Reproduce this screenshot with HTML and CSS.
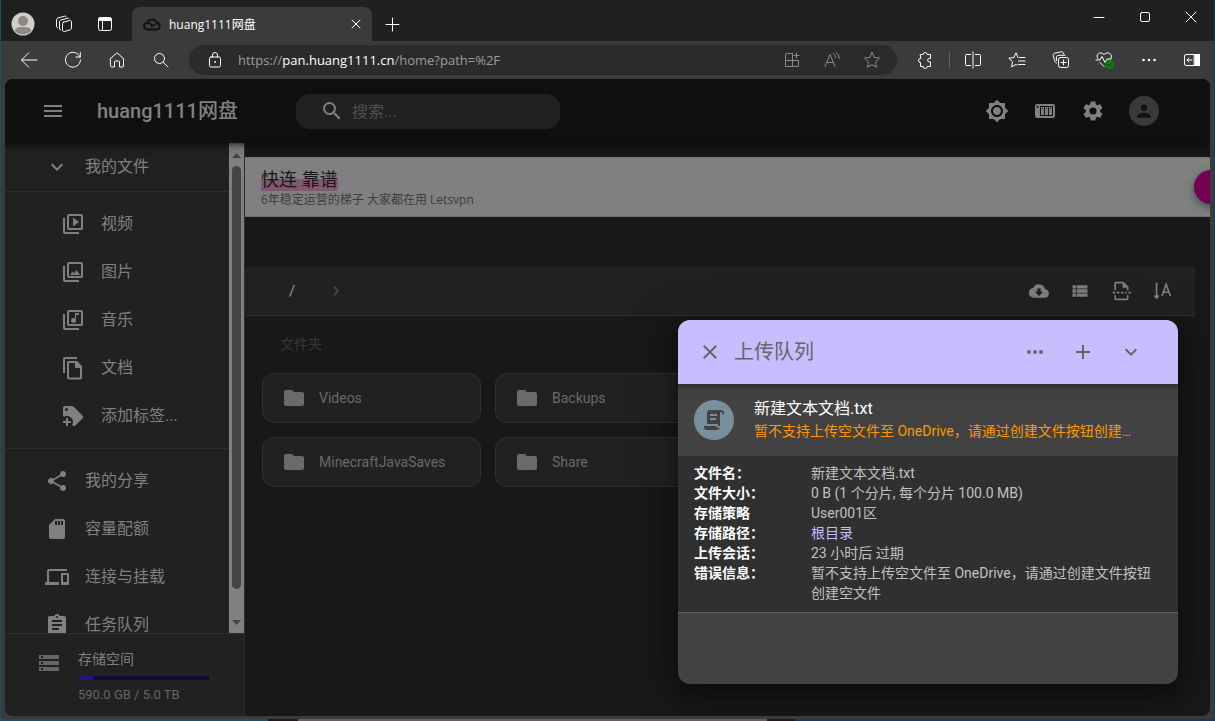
FILE: index.html
```html
<!DOCTYPE html>
<html lang="zh-CN">
<head>
<meta charset="utf-8">
<title>huang1111网盘</title>
<link rel="stylesheet" href="styles.css">
</head>
<body>
<div class="browser">
  <header class="tabstrip">
    <button class="chrome-btn profile" aria-label="Profile"><svg width="24" height="24" viewBox="0 0 24 24"><circle cx="12" cy="12" r="11.5" fill="#d0cecb"/><circle cx="12" cy="9" r="5" fill="#8b8886"/><path d="M4 19c0-3 3-4 8-4s8 1 8 4a11 11 0 0 1-16 0z" fill="#8b8886"/></svg></button>
    <button class="chrome-btn" aria-label="Workspaces"><svg class="line" width="18" height="18" viewBox="0 0 18 18"><path d="M8.500 7.200l6-1.700c1.200-.3 2 .3 2 1.500v6c0 1-.5 1.600-1.500 1.900l-5.500 1.600c-1.200.3-2-.3-2-1.500V9c0-1 .3-1.500 1-1.800z"/><path d="M4.500 14V7c0-1 .5-1.700 1.500-2l6.500-1.800c.6-.2 1-.1 1.500.3M1.500 11.500V5c0-1 .5-1.700 1.500-2l6.500-1.800c.6-.2 1 0 1.500.3M4.500 13.500c.1.700.5 1.200 1.200 1.300M1.500 11.500c0 .6.500 1.200 1.200 1.300"/></svg></button>
    <button class="chrome-btn" aria-label="Tab actions"><svg class="line" width="16" height="16" viewBox="0 0 16 16"><rect x="1.500" y="1.500" width="13" height="13" rx="2"/><path d="M5.500 4v10"/><path d="M2 2h12v2.500H2z" fill="#fff"/></svg></button>
    <div class="tab">
      <svg width="18" height="14" viewBox="0 0 18 14" fill="none" stroke="#111" stroke-width="1.800"><path d="M4.500 12.500a3.300 3.300 0 0 1-.3-6.600A5 5 0 0 1 13.700 6a3.300 3.300 0 0 1 .5 6.500z"/><path d="M4.200 5.900c2.300 0 3.600.7 4.800 2.600M8.500 10c1-1.500 2.500-2.500 4-2"/></svg>
      <span class="tab-title">huang1111网盘</span>
      <button class="tab-close" aria-label="Close tab"><svg class="line" width="10" height="10" viewBox="0 0 10 10"><path d="M1 1l8 8M9 1L1 9"/></svg></button>
    </div>
    <button class="chrome-btn new-tab" aria-label="New tab"><svg class="line" width="15" height="15" viewBox="0 0 15 15"><path d="M7.500 1v13M1 7.500h13"/></svg></button>
    <div class="window-controls">
      <button aria-label="Minimize"><svg class="line" width="12" height="12" viewBox="0 0 12 12"><path d="M1 6.500h10"/></svg></button>
      <button aria-label="Maximize"><svg class="line" width="12" height="12" viewBox="0 0 12 12"><rect x="1.500" y="1.500" width="9" height="9" rx="1.500"/></svg></button>
      <button aria-label="Close"><svg class="line" width="12" height="12" viewBox="0 0 12 12"><path d="M1 1l10 10M11 1L1 11"/></svg></button>
    </div>
  </header>

  <nav class="toolbar">
    <div class="nav-buttons">
      <button class="chrome-btn" aria-label="Back"><svg class="line" width="18" height="18" viewBox="0 0 18 18"><path d="M17 9H1.500M8.500 2l-7 7 7 7"/></svg></button>
      <button class="chrome-btn" aria-label="Refresh"><svg class="line" width="18" height="18" viewBox="0 0 18 18"><path d="M16 6A7.500 7.500 0 1 0 16.500 9M16.300 1.500V6h-4.500"/></svg></button>
      <button class="chrome-btn" aria-label="Home"><svg class="line" width="18" height="18" viewBox="0 0 18 18"><path d="M2.500 7.500L9 1.800l6.500 5.700V15a1 1 0 0 1-1 1h-3v-5a1 1 0 0 0-1-1h-3a1 1 0 0 0-1 1v5h-3a1 1 0 0 1-1-1z"/></svg></button>
      <button class="chrome-btn" aria-label="Search"><svg class="line" width="18" height="18" viewBox="0 0 18 18"><circle cx="7.500" cy="7.500" r="5"/><path d="M11.300 11.300L16 16"/></svg></button>
    </div>
    <div class="address">
      <svg class="line" width="16" height="18" viewBox="0 0 16 18"><rect x="2.500" y="6" width="11" height="10" rx="1.500"/><path d="M5.500 6V4a2.500 2.500 0 0 1 5 0v2"/><circle cx="8" cy="11" r=".5"/></svg>
      <p class="url">https://<b>pan.huang1111.cn</b>/home?path=%2F</p>
      <div class="address-actions">
        <button aria-label="Install app"><svg class="line" width="18" height="18" viewBox="0 0 18 18"><path d="M9.500 2.500h-6a1 1 0 0 0-1 1v12h13v-6M2.500 9.500h13M9.500 2.500v13M13.500 2v5M11 4.500h5"/></svg></button>
        <button aria-label="Read aloud"><svg class="line" width="18" height="18" viewBox="0 0 18 18"><path d="M2 15.500L7 3.500l5 12M3.700 11.500h6.600M10.500 2.500c1.500 1 2 2.500 2 4M13 1.500c2.200 1.500 3.200 3.500 3.200 6"/></svg></button>
        <button aria-label="Add to favorites"><svg class="line" width="18" height="18" viewBox="0 0 18 18"><path d="M9 1.500l2.300 4.900 5.200.7-3.800 3.700.9 5.400L9 13.700l-4.600 2.500.9-5.400L1.500 7.100l5.200-.7z"/></svg></button>
      </div>
    </div>
    <div class="ext-buttons">
      <button aria-label="Extensions"><svg class="line" width="18" height="18" viewBox="0 0 18 18"><path d="M4.500 3.500h2.700a2 2 0 0 1 4 0h3.300v4h-1.200a1.700 1.700 0 0 0 0 3.400h1.200v4.600h-3.300a2 2 0 0 1-4 0H4.500v-4a2 2 0 0 1 0-4z"/></svg></button>
      <span class="divider"></span>
      <button aria-label="Split screen"><svg class="line" width="18" height="18" viewBox="0 0 18 18"><path d="M6.500 3.500h-4a1 1 0 0 0-1 1v9a1 1 0 0 0 1 1h4M11.500 3.500h4a1 1 0 0 1 1 1v9a1 1 0 0 1-1 1h-4M9 1v16"/></svg></button>
      <button aria-label="Favorites"><svg class="line" width="18" height="18" viewBox="0 0 18 18"><path d="M10 6.500L8 1.800 5.800 6.500l-5 .7 3.700 3.600-.9 5 4.400-2.300 1 .5M11.500 6.500H17M10.500 10H17M10.500 13.500H17"/></svg></button>
      <button aria-label="Collections"><svg class="line" width="18" height="18" viewBox="0 0 18 18"><rect x="6.500" y="6.500" width="10" height="10" rx="2"/><path d="M11.500 9v5M9 11.500h5M4.500 12c-1-.3-1.400-.9-1.700-1.800L1.300 4.500C1 3.300 1.500 2.500 2.700 2.200l6.500-1.400c1-.2 1.800.2 2.200 1.200l.4 1M4.500 9.500V6c0-1 .8-1.700 1.700-1.700H13"/></svg></button>
      <button aria-label="Browser essentials"><svg class="line" width="20" height="20" viewBox="0 0 20 20"><path d="M3 9C0 4.500 4.500.5 9 4.500c4.500-4 9 0 7 4M5 12.500l4 4M1 10h4l2-3.500 3 6L12 9h4"/><circle cx="14.500" cy="14.500" r="4.500" fill="#107c10" stroke="none"/><path d="M12.500 14.500l1.500 1.500 2.800-3" stroke="#06480a"/></svg></button>
      <button aria-label="Settings and more"><svg width="18" height="18" viewBox="0 0 18 18" fill="#fff"><circle cx="3.500" cy="9" r="1.300"/><circle cx="9" cy="9" r="1.300"/><circle cx="14.500" cy="9" r="1.300"/></svg></button>
      <button class="side-toggle" aria-label="Sidebar"><svg class="line" width="18" height="18" viewBox="0 0 18 18"><rect x="1.500" y="3.500" width="15" height="11" rx="1.500"/><path d="M11.500 3.500h5v11h-5z" fill="#fff"/><path d="M9 9H4M6 7L4 9l2 2"/></svg></button>
    </div>
  </nav>

  <div class="page">
    <header class="appbar">
      <button class="icon-btn" aria-label="菜单"><svg class="mi" viewBox="0 0 24 24"><path d="M3 18h18v-2H3v2zm0-5h18v-2H3v2zm0-7v2h18V6H3z"/></svg></button>
      <h1>huang1111网盘</h1>
      <label class="search"><svg class="mi" viewBox="0 0 24 24"><path d="M15.500 14h-.79l-.28-.27A6.470 6.470 0 0 0 16 9.500 6.500 6.500 0 1 0 9.500 16c1.610 0 3.090-.59 4.230-1.570l.27.28v.79l5 4.990L20.490 19l-4.990-5zm-6 0C7.010 14 5 11.990 5 9.500S7.010 5 9.500 5 14 7.010 14 9.500 11.990 14 9.500 14z"/></svg><input type="text" placeholder="搜索..." aria-label="搜索"></label>
      <div class="appbar-actions">
        <button class="icon-btn" aria-label="切换主题"><svg class="mi" viewBox="0 0 24 24"><path d="M20 8.690V4h-4.690L12 .69 8.690 4H4v4.690L.69 12 4 15.310V20h4.690L12 23.310 15.310 20H20v-4.690L23.310 12 20 8.690zM12 18c-3.310 0-6-2.690-6-6s2.690-6 6-6 6 2.690 6 6-2.690 6-6 6zm0-10c-2.210 0-4 1.790-4 4s1.790 4 4 4 4-1.790 4-4-1.790-4-4-4z"/></svg></button>
        <button class="icon-btn" aria-label="存储"><svg class="mi" viewBox="0 0 24 24"><path fill-rule="evenodd" d="M4 5h16a2 2 0 0 1 2 2v10a2 2 0 0 1-2 2H4a2 2 0 0 1-2-2V7a2 2 0 0 1 2-2zm.500 2a1 1 0 1 0 0 2 1 1 0 0 0 0-2zM7 7v10h13V7zm1 1h3v8H8zm4 0h3v8h-3zm4 0h3v8h-3zM9 9v1h1V9zm4 0v1h1V9zm4 0v1h1V9z"/></svg></button>
        <button class="icon-btn" aria-label="设置"><svg class="mi" viewBox="0 0 24 24"><path fill-rule="evenodd" d="M19.140 12.940c.04-.3.06-.61.06-.94 0-.32-.02-.64-.07-.94l2.030-1.580c.18-.14.23-.41.12-.61l-1.920-3.320c-.12-.22-.37-.29-.59-.22l-2.390.96c-.5-.38-1.030-.7-1.620-.94l-.36-2.540c-.04-.24-.24-.41-.48-.41h-3.840c-.24 0-.43.17-.47.41l-.36 2.540c-.59.24-1.130.57-1.620.94l-2.390-.96c-.22-.08-.47 0-.59.22L2.740 8.870c-.12.21-.08.47.12.61l2.030 1.580c-.05.3-.09.63-.09.94s.02.64.07.94l-2.030 1.580c-.18.14-.23.41-.12.61l1.920 3.320c.12.22.37.29.59.22l2.390-.96c.5.38 1.030.7 1.620.94l.36 2.540c.05.24.24.41.48.41h3.840c.24 0 .44-.17.47-.41l.36-2.540c.59-.24 1.130-.56 1.620-.94l2.390.96c.22.08.47 0 .59-.22l1.920-3.320c.12-.22.07-.47-.12-.61l-2.010-1.580zM12 8.400a3.600 3.600 0 1 1 0 7.200 3.600 3.600 0 0 1 0-7.200z"/></svg></button>
        <button class="avatar" aria-label="用户"><svg width="20" height="20" viewBox="0 0 24 24" fill="#131313"><path d="M12 12c2.210 0 4-1.790 4-4s-1.790-4-4-4-4 1.790-4 4 1.790 4 4 4zm0 2c-2.670 0-8 1.340-8 4v2h16v-2c0-2.660-5.330-4-8-4z"/></svg></button>
      </div>
    </header>

    <div class="body">
      <aside class="sidebar">
        <div class="side-scroll">
          <div class="side-list">
            <ul class="group">
              <li><a href="#"><svg class="mi" viewBox="0 0 24 24"><path d="M7.410 8.590L12 13.170l4.590-4.580L18 10l-6 6-6-6z"/></svg>我的文件</a></li>
            </ul>
            <ul class="group sub">
              <li><a href="#"><svg class="mi" viewBox="0 0 24 24"><path d="M4 6H2v14c0 1.100.9 2 2 2h14v-2H4V6zm16-4H8c-1.100 0-2 .9-2 2v12c0 1.100.9 2 2 2h12c1.100 0 2-.9 2-2V4c0-1.100-.9-2-2-2zm0 14H8V4h12v12zM12 5.500v9l6-4.500z"/></svg>视频</a></li>
              <li><a href="#"><svg class="mi" viewBox="0 0 24 24"><path d="M4 6H2v14c0 1.100.9 2 2 2h14v-2H4V6zm16-4H8c-1.100 0-2 .9-2 2v12c0 1.100.9 2 2 2h12c1.100 0 2-.9 2-2V4c0-1.100-.9-2-2-2zm0 14H8V4h12v12zM9 15l2.500-3.500 1.500 2 2.500-3.500L19 15z"/></svg>图片</a></li>
              <li><a href="#"><svg class="mi" viewBox="0 0 24 24"><path d="M4 6H2v14c0 1.100.9 2 2 2h14v-2H4V6zm16-4H8c-1.100 0-2 .9-2 2v12c0 1.100.9 2 2 2h12c1.100 0 2-.9 2-2V4c0-1.100-.9-2-2-2zm0 14H8V4h12v12zM12.500 15a2.500 2.500 0 0 0 2.500-2.500V7h3V5h-4v5.500a2.500 2.500 0 1 0-1.500 4.500z"/></svg>音乐</a></li>
              <li><a href="#"><svg class="mi" viewBox="0 0 24 24"><path d="M16 0H4a2 2 0 0 0-2 2v14h2V2h12zm0 4H8a2 2 0 0 0-2 2v14.500a2 2 0 0 0 2 2h11a2 2 0 0 0 2-2V9zM8 20.500V6h6v5h5v9.500z" transform="translate(0 1)"/></svg>文档</a></li>
              <li><a href="#"><svg class="mi" viewBox="0 0 24 24"><path d="M21.410 11.580l-9-9C12.040 2.210 11.530 2 11 2H4C2.900 2 2 2.900 2 4v7c0 .53.21 1.040.59 1.410l.41.41C3.900 12.300 4.940 12 6 12a6 6 0 0 1 6 6c0 1.060-.3 2.090-.82 3l.41.41c.37.37.88.59 1.410.59s1.040-.21 1.410-.59l7-7c.38-.37.59-.88.59-1.410s-.21-1.040-.59-1.420zM5.500 7a1.500 1.500 0 1 1 0-3 1.500 1.500 0 0 1 0 3zM10 19H7v3H5v-3H2v-2h3v-3h2v3h3z"/></svg>添加标签...</a></li>
            </ul>
            <ul class="group last">
              <li><a href="#"><svg class="mi" viewBox="0 0 24 24"><path d="M18 16.080c-.76 0-1.440.3-1.960.77L8.910 12.700a3 3 0 0 0 0-1.400l7.050-4.110A3 3 0 1 0 15.090 5.700L8.040 9.810a3 3 0 1 0 0 4.380l7.120 4.150A2.920 2.920 0 1 0 18 16.080z"/></svg>我的分享</a></li>
              <li><a href="#"><svg class="mi" viewBox="0 0 24 24"><path d="M18 2h-8L4 8v12c0 1.100.9 2 2 2h12c1.100 0 2-.9 2-2V4c0-1.100-.9-2-2-2zm-6 6h-2V4h2v4zm3 0h-2V4h2v4zm3 0h-2V4h2v4z"/></svg>容量配额</a></li>
              <li><a href="#"><svg class="mi" viewBox="0 0 24 24"><path d="M4 6h18V4H4c-1.100 0-2 .9-2 2v11H0v3h14v-3H4V6zm19 2h-6c-.55 0-1 .45-1 1v10c0 .55.45 1 1 1h6c.55 0 1-.45 1-1V9c0-.55-.45-1-1-1zm-1 9h-4v-7h4v7z"/></svg>连接与挂载</a></li>
              <li><a href="#"><svg class="mi" viewBox="0 0 24 24"><path d="M19 3h-4.180C14.400 1.840 13.300 1 12 1s-2.400.84-2.820 2H5c-1.100 0-2 .9-2 2v14c0 1.100.9 2 2 2h14c1.100 0 2-.9 2-2V5c0-1.100-.9-2-2-2zm-7 0c.55 0 1 .45 1 1s-.45 1-1 1-1-.45-1-1 .45-1 1-1zm2 14H7v-2h7v2zm3-4H7v-2h10v2zm0-4H7V7h10v2z"/></svg>任务队列</a></li>
            </ul>
          </div>
          <div class="scrollbar"><i class="arrow up"></i><i class="thumb"></i><i class="arrow down"></i></div>
        </div>
        <div class="quota">
          <svg class="mi" viewBox="0 0 24 24"><path d="M2 20h20v-4H2v4zm2-3h2v2H4v-2zM2 4v4h20V4H2zm4 3H4V5h2v2zm-4 7h20v-4H2v4zm2-3h2v2H4v-2z"/></svg>
          <div class="quota-info">
            <p class="quota-title">存储空间</p>
            <div class="bar"><div class="bar-fill" style="width:11.5%"></div></div>
            <p class="quota-text">590.0 GB / 5.0 TB</p>
          </div>
        </div>
      </aside>

      <main class="main">
        <section class="banner">
          <h2><mark>快连 靠谱</mark></h2>
          <p>6年稳定运营的梯子 大家都在用 Letsvpn</p>
          <span class="bubble"></span>
        </section>
        <div class="files">
          <div class="pathbar">
            <a class="root" href="#">/</a>
            <svg class="mi chevron" viewBox="0 0 24 24"><path d="M10 6L8.590 7.410 13.170 12l-4.580 4.590L10 18l6-6z"/></svg>
            <div class="path-actions">
              <button aria-label="离线下载"><svg class="mi" viewBox="0 0 24 24"><path d="M19.350 10.040A7.490 7.490 0 0 0 5.350 8.040 5.990 5.990 0 0 0 6 20h13a5 5 0 0 0 .35-9.960zM17 13l-5 5-5-5h3V9h4v4z"/></svg></button>
              <button aria-label="视图"><svg class="mi" viewBox="0 0 24 24"><path d="M3 9h4V5H3v4zm0 5h4v-4H3v4zm0 5h4v-4H3v4zM8 9h13V5H8zm0 5h13v-4H8zm0 5h13v-4H8z"/></svg></button>
              <button aria-label="分页"><svg class="mi" viewBox="0 0 24 24"><path d="M6 1a2 2 0 0 0-2 2v8h2V3h8v5h5v3h2V7l-6-6zM4 17v4a2 2 0 0 0 2 2h13a2 2 0 0 0 2-2v-4h-2v4H6v-4zM2 13h3v2H2zm5 0h3v2H7zm5 0h3v2h-3zm5 0h2v2h-2zm4 0h3v2h-3z"/></svg></button>
              <button aria-label="排序"><svg class="mi outlined" viewBox="0 0 24 24"><path d="M5.500 2v19M3 17.500l2.500 3 2.500-3M12 18l5-14 5 14M14 13.500h6"/></svg></button>
            </div>
          </div>
          <h3>文件夹</h3>
          <div class="folders">
            <button class="folder"><svg class="mi" viewBox="0 0 24 24"><path d="M10 4H4c-1.100 0-2 .9-2 2v12c0 1.100.9 2 2 2h16c1.100 0 2-.9 2-2V8c0-1.100-.9-2-2-2h-8z"/></svg>Videos</button>
            <button class="folder"><svg class="mi" viewBox="0 0 24 24"><path d="M10 4H4c-1.100 0-2 .9-2 2v12c0 1.100.9 2 2 2h16c1.100 0 2-.9 2-2V8c0-1.100-.9-2-2-2h-8z"/></svg>Backups</button>
            <button class="folder row-start"><svg class="mi" viewBox="0 0 24 24"><path d="M10 4H4c-1.100 0-2 .9-2 2v12c0 1.100.9 2 2 2h16c1.100 0 2-.9 2-2V8c0-1.100-.9-2-2-2h-8z"/></svg>MinecraftJavaSaves</button>
            <button class="folder"><svg class="mi" viewBox="0 0 24 24"><path d="M10 4H4c-1.100 0-2 .9-2 2v12c0 1.100.9 2 2 2h16c1.100 0 2-.9 2-2V8c0-1.100-.9-2-2-2h-8z"/></svg>Share</button>
          </div>
        </div>
      </main>
    </div>

    <section class="dialog" role="dialog" aria-label="上传队列">
      <header class="dialog-head">
        <button class="icon-btn" aria-label="关闭"><svg class="mi" viewBox="0 0 24 24"><path d="M19 6.410L17.590 5 12 10.590 6.410 5 5 6.410 10.590 12 5 17.590 6.410 19 12 13.410 17.590 19 19 17.590 13.410 12z"/></svg></button>
        <h2>上传队列</h2>
        <button class="icon-btn" aria-label="更多"><svg class="mi" viewBox="0 0 24 24"><path d="M6 10a2 2 0 1 0 0 4 2 2 0 0 0 0-4zm12 0a2 2 0 1 0 0 4 2 2 0 0 0 0-4zm-6 0a2 2 0 1 0 0 4 2 2 0 0 0 0-4z"/></svg></button>
        <button class="icon-btn" aria-label="添加"><svg class="mi" viewBox="0 0 24 24"><path d="M19 13h-6v6h-2v-6H5v-2h6V5h2v6h6z"/></svg></button>
        <button class="icon-btn" aria-label="收起"><svg class="mi" viewBox="0 0 24 24"><path d="M7.410 8.590L12 13.170l4.590-4.580L18 10l-6 6-6-6z"/></svg></button>
      </header>
      <div class="upload">
        <span class="file-icon"><svg width="24" height="24" viewBox="0 0 24 24" fill="#424242"><path d="M17.800 20c-.4 1.200-1.500 2-2.800 2H5c-1.700 0-3-1.300-3-3v-1h12.200c.4 1.200 1.500 2 2.800 2h.8M19 2c1.700 0 3 1.300 3 3v1h-2V5c0-.6-.4-1-1-1s-1 .4-1 1v13h-1c-.6 0-1-.4-1-1v-1H5V5c0-1.700 1.300-3 3-3h11M8 6v2h7V6H8m0 4v2h6v-2H8z"/></svg></span>
        <div class="upload-text">
          <p class="upload-name">新建文本文档.txt</p>
          <p class="upload-error">暂不支持上传空文件至 OneDrive，请通过创建文件按钮创建空文件</p>
        </div>
      </div>
      <dl class="details">
        <dt>文件名：</dt><dd>新建文本文档.txt</dd>
        <dt>文件大小：</dt><dd>0 B (1 个分片, 每个分片 100.0 MB)</dd>
        <dt>存储策略</dt><dd>User001区</dd>
        <dt>存储路径：</dt><dd><a href="#">根目录</a></dd>
        <dt>上传会话：</dt><dd>23 小时后 过期</dd>
        <dt>错误信息：</dt><dd>暂不支持上传空文件至 OneDrive，请通过创建文件按钮创建空文件</dd>
      </dl>
    </section>
  </div>
</div>
</body>
</html>
```

FILE: styles.css
```css
* { box-sizing: border-box; margin: 0; padding: 0; }

body {
  height: 100vh;
  padding: 0 1px 2px 1px;
  overflow: hidden;
  background: linear-gradient(90deg, #1b5166 0 268px, #241a1c 268px 298px, #6a5f60 298px 767px, #241a1c 767px 795px, #1b3766 795px);
  font-family: Roboto, "Noto Sans CJK SC", sans-serif;
  font-size: 14px;
}

button { border: 0; background: none; color: inherit; font: inherit; display: flex; align-items: center; justify-content: center; }
a { color: inherit; text-decoration: none; }
ul { list-style: none; }
svg { flex: none; display: block; }
.line { fill: none; stroke: currentColor; stroke-width: 1; stroke-linecap: round; stroke-linejoin: round; }
.mi { width: 24px; height: 24px; fill: currentColor; }
.outlined { fill: none; stroke: currentColor; stroke-width: 2; }

/* Browser frame */
.browser { height: 100%; display: flex; flex-direction: column; background: #3b3b3b; color: #fff; }
.tabstrip { flex: none; height: 41px; padding-left: 1px; display: flex; align-items: flex-end; background: #202020; font-family: "Open Sans", "Noto Sans CJK SC", sans-serif; font-size: 12px; }
.chrome-btn { width: 44px; height: 34px; }
.tabstrip > .chrome-btn { width: 41px; }
.tab { width: 240px; height: 34px; margin-left: 7px; padding: 0 11px; display: flex; align-items: center; gap: 8px; border-radius: 8px 8px 0 0; background: #3b3b3b; }
.tab-title { flex: 1; }
.window-controls { margin-left: auto; align-self: flex-start; display: flex; }
.window-controls button { width: 46px; height: 34px; }

.toolbar { flex: none; height: 38px; padding: 0 1px 0 6px; display: flex; align-items: center; font-family: "Open Sans", sans-serif; }
.nav-buttons { display: flex; }
.address { flex: 1; height: 30px; margin-left: 6px; padding: 0 5px 0 18px; display: flex; align-items: center; gap: 15px; border-radius: 15px; background: #2b2b2b; }
.url { flex: 1; color: #9b9b9b; font-size: 13px; }
.url b { font-weight: 400; color: #fff; }
.address-actions { display: flex; color: #8b8b8b; }
.address-actions button { width: 40px; height: 30px; }
.ext-buttons { display: flex; align-items: center; padding-left: 6px; }
.ext-buttons button { width: 44px; height: 30px; }
.ext-buttons .side-toggle { width: 42px; }
.divider { width: 1px; height: 16px; margin: 0 1px 0 2px; background: #626262; }

/* Page */
.page { flex: 1; min-height: 0; margin: 0 4px 3px; position: relative; display: flex; flex-direction: column; overflow: hidden; border-radius: 8px; background: #181818; color: #808080; }
.appbar { flex: none; height: 64px; padding: 0 51px 0 24px; position: relative; display: flex; align-items: center; background: #101010; box-shadow: 0 2px 4px rgba(0, 0, 0, .4), 0 4px 10px rgba(0, 0, 0, .3); }
.icon-btn { width: 48px; height: 48px; }
.appbar h1 { margin: 0 58px 0 20px; font-size: 20px; font-weight: 500; line-height: 32px; white-space: nowrap; }
.search { width: 264px; height: 35px; padding: 0 24px; display: flex; align-items: center; gap: 8px; border-radius: 14px; background: #212121; }
.search input { min-width: 0; flex: 1; border: 0; outline: 0; background: none; font: inherit; font-size: 16px; }
.search input::placeholder { color: #505050; opacity: 1; }
.appbar-actions { margin-left: auto; display: flex; align-items: center; }
.avatar { width: 30px; height: 30px; margin-left: 12px; border-radius: 50%; background: #3a3a3a; }

.body { flex: 1; min-height: 0; display: flex; }
.sidebar { flex: none; width: 240px; display: flex; flex-direction: column; border-right: 1px solid #2c2c2c; background: #212121; }
.side-scroll { flex: 1; min-height: 0; display: flex; }
.side-list { flex: 1; overflow: hidden; font-size: 16px; line-height: 20px; }
.group { border-bottom: 1px solid #2e2e2e; }
.sub, .last { padding: 8px 0; }
.group a { height: 48px; padding-left: 40px; display: flex; align-items: center; gap: 16px; }
.sub a { padding-left: 56px; }
.scrollbar { width: 15px; padding: 10px 3px 8px; display: flex; flex-direction: column; gap: 8px; background: #808080; }
.thumb { flex: 1; margin-bottom: 23px; border-radius: 5px; background: #444; }
.arrow { height: 5px; background: #444; }
.up { clip-path: polygon(50% 0, 100% 100%, 0 100%); }
.down { clip-path: polygon(0 0, 100% 0, 50% 100%); }
.quota { flex: none; height: 83px; padding: 17px 35px 0 32px; display: flex; gap: 17px; border-top: 1px solid #2e2e2e; }
.quota .mi { color: #666; }
.quota-info { flex: 1; }
.quota-title { line-height: 16px; }
.bar { height: 4px; margin: 9px 0 7px; background: #16063c; }
.bar-fill { height: 4px; background: #2e0f80; }
.quota-text { color: #666; font-size: 13px; line-height: 16px; }

.main { flex: 1; min-width: 0; padding-top: 14px; }
.banner { height: 60px; padding: 9px 16px; position: relative; overflow: hidden; border: solid #707070; border-width: 1px 0; background: #808080; color: #3c3c3c; font-family: "Open Sans", "Noto Sans CJK SC", sans-serif; font-size: 12px; line-height: 18px; }
.banner h2 { font-size: 18px; font-weight: 400; line-height: 24px; }
.banner mark { color: #161616; background: linear-gradient(transparent 50%, #805870 50%); }
.bubble { position: absolute; right: -18px; top: 12px; width: 34px; height: 34px; border-radius: 50%; background: #730050; box-shadow: 0 3px 8px rgba(0, 20, 40, .5); }
.files { margin: 50px 15px 0 0; }
.pathbar { height: 49px; padding: 0 13px 0 44px; display: flex; align-items: center; border-bottom: 1px solid #303030; background: #212121; }
.root { color: #999; font-size: 15px; }
.chevron { width: 20px; height: 20px; margin-left: 31px; color: #484848; }
.path-actions { margin-left: auto; display: flex; }
.path-actions button { width: 41px; height: 40px; }
.path-actions .mi { width: 20px; height: 20px; }
.files h3 { padding: 18px 0 18px 35px; color: #373737; font-size: 14px; font-weight: 400; line-height: 21px; }
.folders { padding: 0 15px 0 17px; display: grid; grid-template-columns: repeat(4, 1fr); gap: 14px; }
.folder { height: 50px; min-width: 0; padding-left: 19px; justify-content: flex-start; gap: 13px; border: 1px solid #303030; border-radius: 12px; background: #212121; color: #6a6a6a; }
.row-start { grid-column: 1; }

/* Upload queue */
.dialog { position: absolute; right: 32px; bottom: 32px; width: 500px; height: 364px; overflow: hidden; border-radius: 12px; background: #424242; box-shadow: 0 11px 15px rgba(0, 0, 0, .3), 0 9px 46px 8px rgba(0, 0, 0, .25); }
.dialog-head { height: 64px; padding: 0 23px 0 8px; position: relative; display: flex; align-items: center; background: #c7bdff; color: #666; box-shadow: 0 2px 4px rgba(0, 0, 0, .25), 0 4px 8px rgba(0, 0, 0, .15); }
.dialog-head h2 { flex: 1; font-size: 20px; font-weight: 400; line-height: 32px; }
.upload { height: 72px; padding: 0 40px 0 16px; display: flex; align-items: center; gap: 20px; }
.file-icon { flex: none; width: 40px; height: 40px; display: flex; align-items: center; justify-content: center; border-radius: 50%; background: #78909c; }
.upload-text { min-width: 0; }
.upload-name { color: #fff; font-size: 16px; line-height: 22px; }
.upload-error { color: #ff9800; line-height: 22px; white-space: nowrap; overflow: hidden; text-overflow: ellipsis; }
.details { padding: 7px 16px 9px; display: grid; grid-template-columns: 117px 1fr; border-bottom: 1px solid #616161; background: #303030; line-height: 20px; }
.details dt { color: #fff; font-weight: 700; }
.details dd { color: #c1c1c1; }
.details a { color: #c7bdff; }
```
